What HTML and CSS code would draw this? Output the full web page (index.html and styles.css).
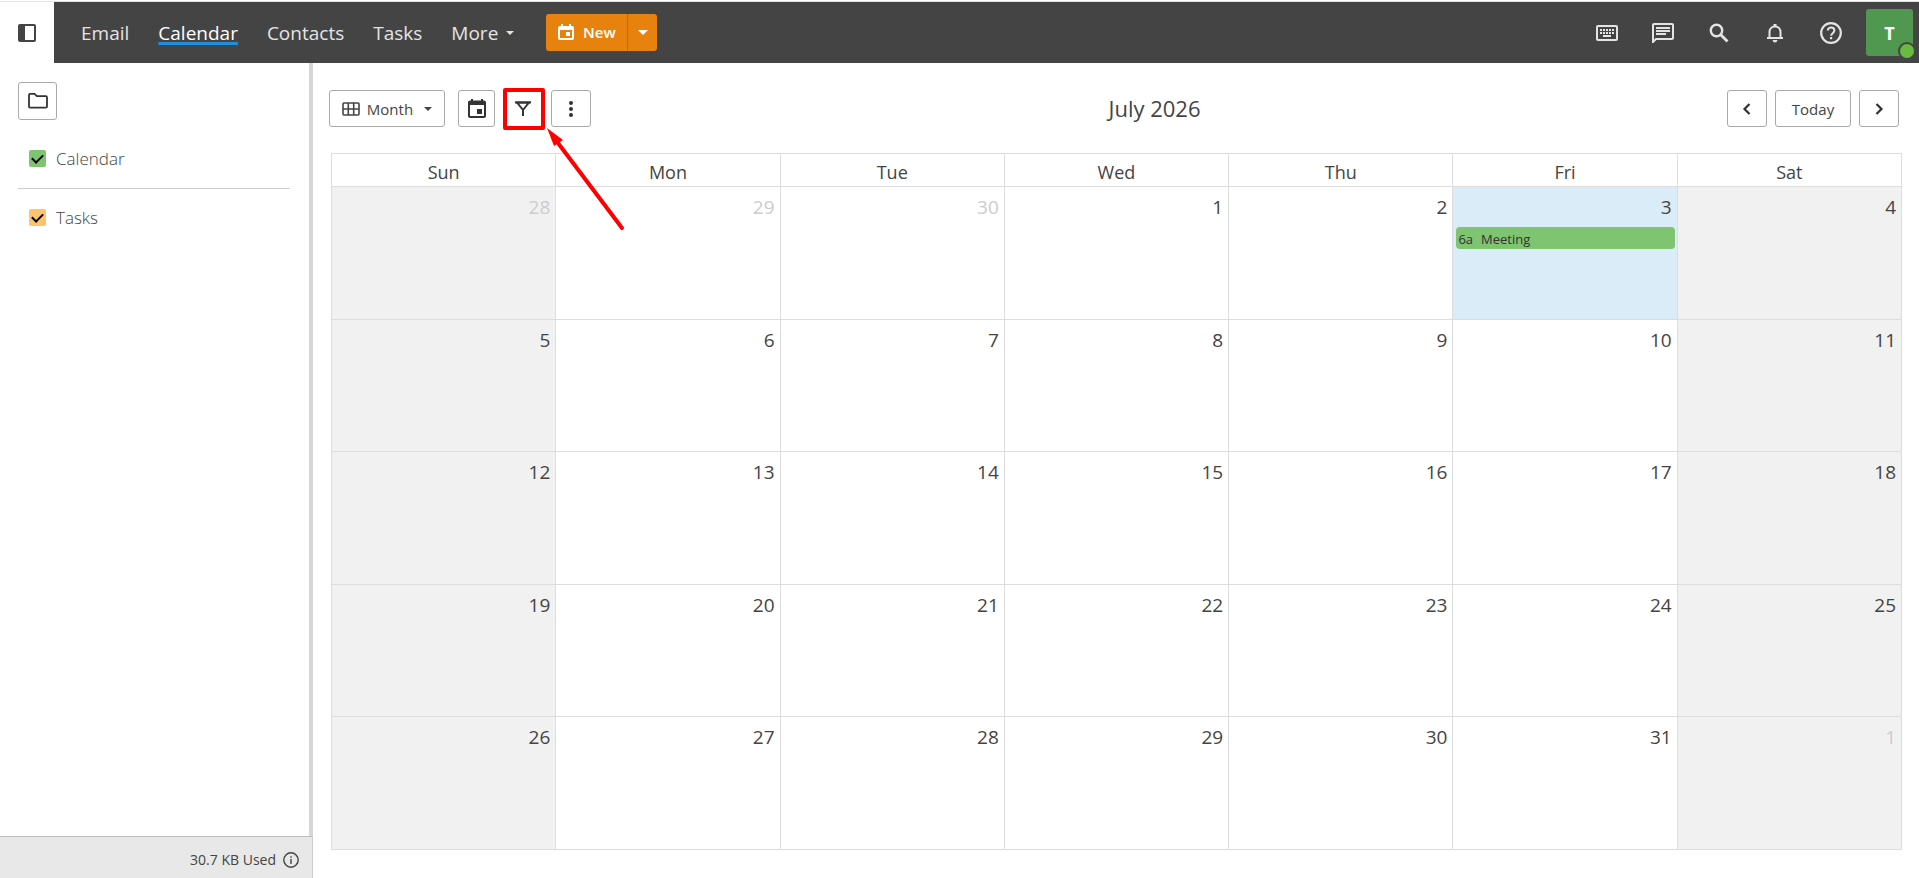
FILE: index.html
```html
<!DOCTYPE html>
<html lang="en">
<head>
    <meta charset="UTF-8">
    <meta name="viewport" content="width=device-width, initial-scale=1.0">
    <title>Calendar</title>
    <link rel="stylesheet" href="styles.css">
</head>
<body>
    <header class="topbar">
        <button class="panel-toggle" aria-label="Toggle sidebar">
            <svg width="18" height="18" viewBox="0 0 18 18"><rect x="1" y="1" width="16" height="16" rx="1" fill="none" stroke="#444" stroke-width="2"/><path d="M1 1h6v16H1z" fill="#444"/></svg>
        </button>
        <nav class="nav">
            <a href="#">Email</a>
            <a href="#" class="active">Calendar</a>
            <a href="#">Contacts</a>
            <a href="#">Tasks</a>
            <a href="#" class="more">More <span class="caret"></span></a>
        </nav>
        <div class="new-group">
            <button class="new-button">
                <svg width="16" height="18" viewBox="0 0 16 18"><path d="M3 1h2v2h6V1h2v2h1q2 0 2 2v10q0 2-2 2H2q-2 0-2-2V5q0-2 2-2h1zM2 7v8h12V7zM8 9h4v4H8z" fill="#fff" fill-rule="evenodd"/></svg>
                New
            </button>
            <button class="new-more" aria-label="More new items"><span class="caret caret-large"></span></button>
        </div>
        <div class="tools">
            <button aria-label="Keyboard shortcuts">
                <svg width="22" height="16" viewBox="0 0 22 16"><rect x="1" y="1" width="20" height="14" rx="1" fill="none" stroke="#e4e4e4" stroke-width="2"/><path d="M4 4h2v2H4zM7 4h2v2H7zM10 4h2v2h-2zM13 4h2v2h-2zM16 4h2v2h-2zM4 7h2v2H4zM7 7h2v2H7zM10 7h2v2h-2zM13 7h2v2h-2zM16 7h2v2h-2zM7 10h8v2H7z" fill="#e4e4e4"/></svg>
            </button>
            <button aria-label="Chat">
                <svg width="22" height="20" viewBox="0 0 22 20"><path d="M1 19V2q0-1 1-1h18q1 0 1 1v13q0 1-1 1H4z" fill="none" stroke="#e4e4e4" stroke-width="2"/><path d="M4 4h14v2H4zM4 7h14v2H4zM4 10h10v2H4z" fill="#e4e4e4"/></svg>
            </button>
            <button aria-label="Search">
                <svg width="20" height="20" viewBox="0 0 20 20"><circle cx="7.500" cy="7.500" r="5.700" fill="none" stroke="#e4e4e4" stroke-width="2.400"/><path d="M11.500 11.500l7 7" stroke="#e4e4e4" stroke-width="2.800"/></svg>
            </button>
            <button aria-label="Notifications">
                <svg width="18" height="20" viewBox="0 0 18 20"><path d="M3.500 15V9c0-3 2-5.500 5.500-5.500s5.500 2.500 5.500 5.500v6" fill="none" stroke="#e4e4e4" stroke-width="2"/><path d="M1 14h16v2H1zM7.500 1h3v3h-3zM6.500 17h5q-.5 2.500-2.500 2.500T6.500 17" fill="#e4e4e4"/></svg>
            </button>
            <button aria-label="Help">
                <svg width="22" height="22" viewBox="0 0 22 22"><circle cx="11" cy="11" r="9.800" fill="none" stroke="#e4e4e4" stroke-width="2.200"/><path d="M7.800 8.600c0-4.200 6.600-4 6.600 0 0 2.500-3.300 2.700-3.300 5.200" fill="none" stroke="#e4e4e4" stroke-width="2"/><path d="M10 15h2.200v2.200H10z" fill="#e4e4e4"/></svg>
            </button>
        </div>
        <button class="avatar" aria-label="Account">T<span class="status"></span></button>
    </header>

    <div class="page">
        <aside class="sidebar">
            <div class="folders">
                <button class="btn folder-button" aria-label="Folders">
                    <svg width="22" height="18" viewBox="0 0 22 18"><path d="M2 14.500V3q0-1.200 1.200-1.200H7.500L10 4.200h8.800q1.200 0 1.200 1.200v9.100q0 1.200-1.200 1.200H3.200Q2 15.700 2 14.500z" fill="none" stroke="#333" stroke-width="1.800"/></svg>
                </button>
                <label class="folder"><input type="checkbox" class="check-calendar" checked>Calendar</label>
                <hr>
                <label class="folder"><input type="checkbox" class="check-tasks" checked>Tasks</label>
            </div>
            <footer class="usage">
                30.7 KB Used
                <svg width="16" height="16" viewBox="0 0 16 16"><circle cx="8" cy="8" r="7.200" fill="none" stroke="#444" stroke-width="1.400"/><path d="M7.300 7h1.400v5H7.300zM7.300 4.200h1.400v1.500H7.300z" fill="#444"/></svg>
            </footer>
        </aside>

        <main class="main">
            <div class="toolbar">
                <div class="toolbar-left">
                    <button class="btn view-button">
                        <svg width="18" height="14" viewBox="0 0 18 14"><rect x="1" y="1" width="16" height="12" rx="1" fill="none" stroke="#444" stroke-width="1.600"/><path d="M1 7h16M6.300 1v12M11.700 1v12" stroke="#444" stroke-width="1.600"/></svg>
                        Month
                        <span class="caret"></span>
                    </button>
                    <button class="btn date-button" aria-label="Go to date">
                        <svg width="18" height="19" viewBox="0 0 18 19"><path d="M14 10H9v5h5v-5zM13 0v1.500H5V0H3v1.500H2C.9 1.500 0 2.400 0 3.500v13.500c0 1.100.9 2 2 2h14c1.100 0 2-.9 2-2V3.500c0-1.100-.9-2-2-2h-1V0h-2zm3 17H2V6h14v11z" fill="#333"/></svg>
                    </button>
                    <div class="filter">
                        <button class="btn icon-button" aria-label="Filter">
                            <svg width="16" height="16" viewBox="0 0 16 16"><path d="M2 1.500h12L8 9zM8 8v7" fill="none" stroke="#333" stroke-width="2"/><path d="M0 .5h16v2H0z" fill="#333"/></svg>
                        </button>
                        <span class="highlight"></span>
                        <svg class="arrow" width="80" height="106" viewBox="0 0 80 106"><path d="M8 11L75 100" stroke="#f00" stroke-width="4" stroke-linecap="round"/><path d="M0 0l16 12-9 6z" fill="#f00"/></svg>
                    </div>
                    <button class="btn icon-button" aria-label="More actions">
                        <svg width="4" height="16" viewBox="0 0 4 16"><circle cx="2" cy="2" r="2" fill="#333"/><circle cx="2" cy="8" r="2" fill="#333"/><circle cx="2" cy="14" r="2" fill="#333"/></svg>
                    </button>
                </div>
                <h1>July 2026</h1>
                <div class="toolbar-right">
                    <button class="btn icon-button" aria-label="Previous month">
                        <svg width="10" height="12" viewBox="0 0 10 12"><path d="M7.500 1L2.500 6l5 5" fill="none" stroke="#333" stroke-width="2.200"/></svg>
                    </button>
                    <button class="btn today-button">Today</button>
                    <button class="btn icon-button" aria-label="Next month">
                        <svg width="10" height="12" viewBox="0 0 10 12"><path d="M2.500 1l5 5-5 5" fill="none" stroke="#333" stroke-width="2.200"/></svg>
                    </button>
                </div>
            </div>

            <table class="month">
                <thead>
                    <tr><th>Sun</th><th>Mon</th><th>Tue</th><th>Wed</th><th>Thu</th><th>Fri</th><th>Sat</th></tr>
                </thead>
                <tbody>
                    <tr>
                        <td class="weekend other">28</td><td class="other">29</td><td class="other">30</td><td>1</td><td>2</td>
                        <td class="today">3<a href="#" class="event"><span>6a</span>Meeting</a></td>
                        <td class="weekend">4</td>
                    </tr>
                    <tr><td class="weekend">5</td><td>6</td><td>7</td><td>8</td><td>9</td><td>10</td><td class="weekend">11</td></tr>
                    <tr><td class="weekend">12</td><td>13</td><td>14</td><td>15</td><td>16</td><td>17</td><td class="weekend">18</td></tr>
                    <tr><td class="weekend">19</td><td>20</td><td>21</td><td>22</td><td>23</td><td>24</td><td class="weekend">25</td></tr>
                    <tr><td class="weekend">26</td><td>27</td><td>28</td><td>29</td><td>30</td><td>31</td><td class="weekend other">1</td></tr>
                </tbody>
            </table>
        </main>
    </div>
</body>
</html>
```
FILE: styles.css
```css
* {
    box-sizing: border-box;
}
body {
    margin: 0;
    padding-top: 1px;
    height: 100vh;
    display: flex;
    flex-direction: column;
    font-family: "Open Sans", "Noto Sans", sans-serif;
    color: #444;
    background-color: #fff;
}
button {
    display: flex;
    align-items: center;
    justify-content: center;
    padding: 0;
    border: none;
    background: none;
    font-family: inherit;
    color: inherit;
    cursor: pointer;
}
svg {
    display: block;
    flex: none;
}
.caret {
    border: 4px solid transparent;
    border-top-color: currentColor;
    border-bottom: none;
}
.caret-large {
    border-width: 5px 5px 0;
}

/* top bar */
.topbar {
    display: flex;
    align-items: center;
    height: 62px;
    flex: none;
    border-top: 1px solid #e0e4e3;
    padding-right: 6px;
    background-color: #444;
}
.panel-toggle {
    align-self: stretch;
    width: 54px;
    background-color: #fff;
}
.nav {
    display: flex;
    gap: 29px;
    padding-left: 27px;
}
.nav a {
    color: #e4e4e4;
    font-size: 19px;
    line-height: 28px;
    text-decoration: none;
}
.nav a.active {
    color: #fff;
    text-decoration: underline 3px #1c8fe0;
    text-underline-offset: 2px;
}
.nav .more {
    display: flex;
    align-items: center;
    gap: 8px;
}
.new-group {
    display: flex;
    height: 37px;
    margin-left: 32px;
    margin-bottom: 1px;
    border-radius: 3px;
    background-color: #e7820f;
    color: #fff;
}
.new-button {
    width: 82px;
    gap: 9px;
    font-size: 15px;
    font-weight: 600;
    border-right: 1px solid #c06a08;
}
.new-more {
    width: 29px;
}
.tools {
    display: flex;
    gap: 35px;
    margin-left: auto;
    margin-right: 25px;
}
.tools button {
    width: 21px;
}
.avatar {
    position: relative;
    width: 47px;
    height: 47px;
    border-radius: 3px;
    background-color: #509750;
    color: #fff;
    font-size: 18px;
    font-weight: 700;
}
.status {
    position: absolute;
    right: -3px;
    bottom: -4px;
    width: 18px;
    height: 18px;
    border: 2px solid #444;
    border-radius: 50%;
    background-color: #68bb40;
}

/* sidebar */
.page {
    display: flex;
    flex: 1;
    min-height: 0;
}
.sidebar {
    display: flex;
    flex-direction: column;
    width: 313px;
    flex: none;
}
.folders {
    flex: 1;
    padding: 19px 19px 0 18px;
    border-right: 4px solid #d6d6d6;
}
.btn {
    height: 37px;
    border: 1px solid #aaa;
    border-radius: 3px;
    background-color: #fff;
    font-size: 15px;
}
.folder-button {
    width: 39px;
    height: 38px;
    margin-bottom: 24px;
}
.folder {
    display: flex;
    align-items: center;
    gap: 10px;
    height: 28px;
    padding-left: 11px;
    font-size: 17px;
    font-weight: 300;
}
.folder input {
    appearance: none;
    width: 17px;
    height: 17px;
    margin: 0;
    border-radius: 2px;
    display: grid;
    place-items: center;
}
.folder input:checked::before {
    content: "";
    width: 9px;
    height: 5px;
    margin-bottom: 2px;
    border-left: 2px solid #000;
    border-bottom: 2px solid #000;
    transform: rotate(-45deg);
}
.check-calendar {
    background-color: #7fc470;
}
.check-tasks {
    background-color: #fdc46c;
}
hr {
    margin: 16px 0 14px;
    border: none;
    border-top: 1px solid #ccc;
}
.usage {
    display: flex;
    align-items: center;
    justify-content: flex-end;
    gap: 7px;
    height: 42px;
    padding: 4px 13px 0 0;
    border-top: 1px solid #bbb;
    border-right: 1px solid #ccc;
    background-color: #e8e8e8;
    font-size: 14px;
}

/* calendar */
.main {
    display: flex;
    flex-direction: column;
    flex: 1;
    padding: 27px 17px 28px 18px;
}
.toolbar {
    display: flex;
    justify-content: space-between;
    margin: 0 3px 26px -2px;
}
.toolbar h1 {
    margin: 0;
    padding-right: 9px;
    font-size: 22px;
    font-weight: 400;
    line-height: 37px;
}
.toolbar-left,
.toolbar-right {
    display: flex;
    gap: 8px;
}
.view-button {
    width: 116px;
    gap: 7px;
    margin-right: 5px;
}
.view-button .caret {
    margin-left: 4px;
}
.date-button {
    width: 37px;
}
.icon-button {
    width: 40px;
}
.today-button {
    width: 76px;
}
.filter {
    position: relative;
}
.highlight {
    position: absolute;
    top: -2px;
    left: 0;
    width: 42px;
    height: 42px;
    border: 4px solid #f00;
    border-radius: 2px;
    pointer-events: none;
}
.arrow {
    position: absolute;
    top: 38px;
    left: 44px;
    pointer-events: none;
}
.month {
    flex: 1;
    width: 100%;
    table-layout: fixed;
    border-collapse: collapse;
}
.month th,
.month td {
    border: 1px solid #ddd;
}
.month th {
    height: 33px;
    padding: 3px 0 0;
    font-size: 18px;
    font-weight: 400;
    line-height: 24px;
}
.month td {
    height: 20%;
    padding: 6px 5px 0 2px;
    font-size: 19px;
    line-height: 28px;
    text-align: right;
    vertical-align: top;
}
.month .weekend {
    background-color: #f1f1f1;
}
.month .other {
    color: #ccc;
}
.month .today {
    background-color: #d9ecf7;
}
.event {
    display: flex;
    gap: 8px;
    height: 22px;
    margin: 6px -3px 0 1px;
    padding-left: 2px;
    border-radius: 4px;
    background-color: #7fc470;
    color: #333;
    font-size: 13px;
    line-height: 24px;
    text-decoration: none;
}
```
